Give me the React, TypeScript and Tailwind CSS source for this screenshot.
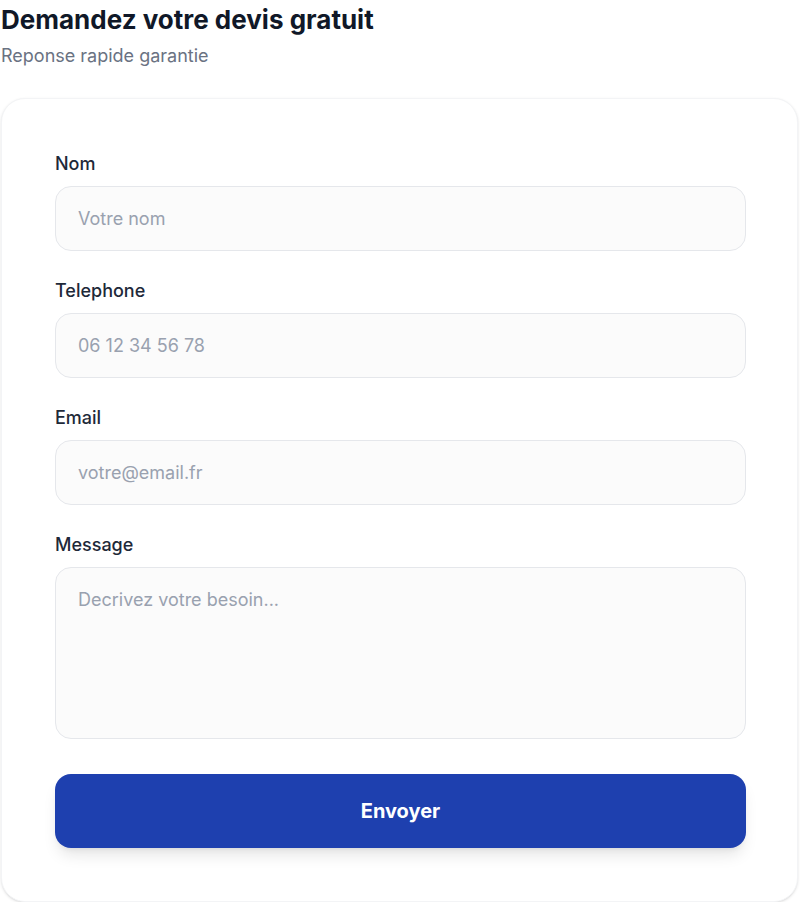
import React from 'react';

const fields = [
  { label: 'Nom', placeholder: 'Votre nom', type: 'text' },
  { label: 'Telephone', placeholder: '06 12 34 56 78', type: 'tel' },
  { label: 'Email', placeholder: 'votre@email.fr', type: 'email' },
];

const App: React.FC = () => {
  return (
    <div className="min-h-[902px] bg-white font-['Inter',sans-serif] pt-1 pl-px">
      <h1 className="text-[26px] font-bold text-gray-900 leading-8">Demandez votre devis gratuit</h1>
      <p className="mt-2 text-lg text-gray-500 leading-6">Reponse rapide garantie</p>

      <form
        className="mt-[30px] w-[797px] rounded-3xl border border-gray-100 bg-white pt-[53px] pb-[53px] pl-[53px] pr-[51px] shadow-sm"
        onSubmit={(e) => e.preventDefault()}
      >
        <div className="flex flex-col gap-7">
          {fields.map((f) => (
            <div key={f.label}>
              <label className="mb-2.5 block text-lg font-medium leading-6 text-gray-800">{f.label}</label>
              <input
                type={f.type}
                placeholder={f.placeholder}
                className="h-[65px] w-full rounded-2xl border border-gray-200 bg-[#fbfbfb] px-[22px] text-lg text-gray-800 placeholder:text-gray-400 outline-none"
              />
            </div>
          ))}
          <div>
            <label className="mb-2.5 block text-lg font-medium leading-6 text-gray-800">Message</label>
            <textarea
              placeholder="Decrivez votre besoin..."
              className="block h-[172px] w-full resize-none rounded-2xl border border-gray-200 bg-[#fbfbfb] px-[22px] py-[18px] text-lg text-gray-800 placeholder:text-gray-400 outline-none"
            />
          </div>
        </div>
        <button
          type="submit"
          className="mt-[35px] h-[74px] w-full rounded-2xl bg-[#1e40af] text-xl font-bold text-white shadow-lg"
        >
          Envoyer
        </button>
      </form>
    </div>
  );
};

export default App;
